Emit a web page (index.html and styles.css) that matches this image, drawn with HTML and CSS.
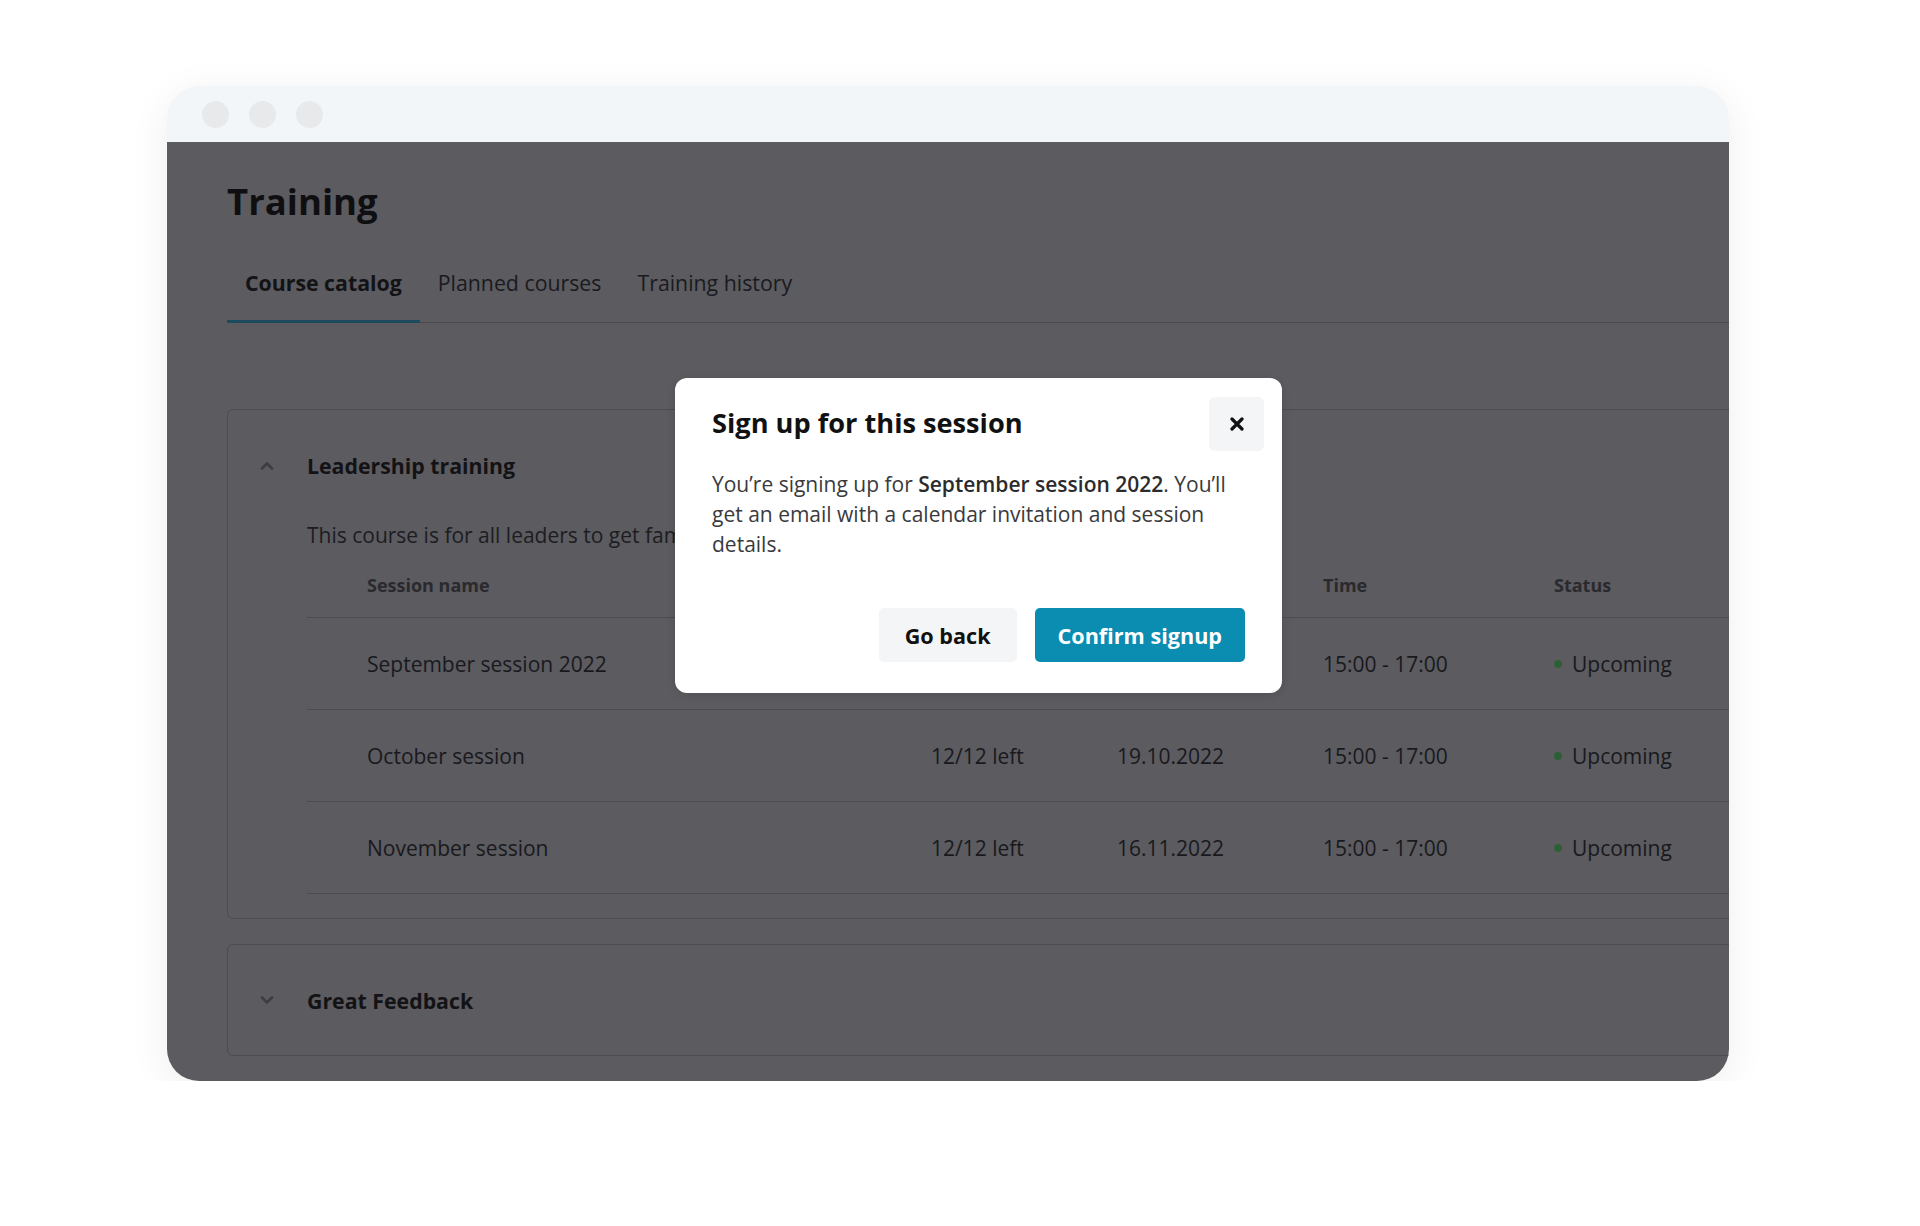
FILE: index.html
```html
<!DOCTYPE html>
<html lang="en">
  <head>
    <meta charset="UTF-8" />
    <title>Training</title>
    <link rel="stylesheet" href="styles.css">
  </head>
  <body>
    <div class="page">
      <div class="window">
        <div class="titlebar">
          <span class="dot"></span>
          <span class="dot"></span>
          <span class="dot"></span>
        </div>

        <div class="content">
          <h1 class="page-title">Training</h1>

          <div class="tabs">
            <div class="tab active">Course catalog</div>
            <div class="tab">Planned courses</div>
            <div class="tab">Training history</div>
          </div>

          <div class="course">
            <div class="course-head">
              <svg class="chevron" width="14" height="9" viewBox="0 0 14 9"><path d="M2 7.5 L7 2.5 L12 7.5" /></svg>
              <span class="course-name">Leadership training</span>
            </div>
            <div class="course-body">
              <p class="course-desc">This course is for all leaders to get familiar with our leadership principles.</p>

              <div class="sessions">
                <div class="row head">
                  <span></span>
                  <span>Session name</span>
                  <span>Seats</span>
                  <span>Date</span>
                  <span>Time</span>
                  <span>Status</span>
                </div>
                <div class="row">
                  <span></span>
                  <span>September session 2022</span>
                  <span>12/12 left</span>
                  <span>21.09.2022</span>
                  <span>15:00 - 17:00</span>
                  <span class="status"><i class="status-dot"></i>Upcoming</span>
                </div>
                <div class="row">
                  <span></span>
                  <span>October session</span>
                  <span>12/12 left</span>
                  <span>19.10.2022</span>
                  <span>15:00 - 17:00</span>
                  <span class="status"><i class="status-dot"></i>Upcoming</span>
                </div>
                <div class="row">
                  <span></span>
                  <span>November session</span>
                  <span>12/12 left</span>
                  <span>16.11.2022</span>
                  <span>15:00 - 17:00</span>
                  <span class="status"><i class="status-dot"></i>Upcoming</span>
                </div>
              </div>
            </div>
          </div>

          <div class="course closed">
            <div class="course-head">
              <svg class="chevron" width="14" height="9" viewBox="0 0 14 9"><path d="M2 1.5 L7 6.5 L12 1.5" /></svg>
              <span class="course-name">Great Feedback</span>
            </div>
          </div>
        </div>

        <div class="modal">
          <h2 class="modal-title">Sign up for this session</h2>
          <button class="modal-close">
            <svg width="14" height="14" viewBox="0 0 14 14"><path d="M2 2 L12 12 M12 2 L2 12" /></svg>
          </button>
          <p class="modal-text">You’re signing up for <strong>September session 2022</strong>. You’ll get an email with a calendar invitation and session details.</p>
          <div class="modal-actions">
            <button class="btn secondary">Go back</button>
            <button class="btn primary">Confirm signup</button>
          </div>
        </div>
      </div>
    </div>
  </body>
</html>
```

FILE: styles.css
```css
body {
  margin: 0;
  background-color: #fff;
  font-family: "Open Sans", "Noto Sans", sans-serif;
}
.page {
  padding: 86px 0 0 167px;
}
.window {
  position: relative;
  width: 1562px;
  height: 995px;
  border-radius: 32px;
  overflow: hidden;
  box-shadow: 0 8px 40px rgba(0, 0, 0, 0.07);
  display: flex;
  flex-direction: column;
}
.titlebar {
  height: 56px;
  flex-shrink: 0;
  background-color: #f3f6f8;
  display: flex;
  align-items: center;
  gap: 20px;
  padding-left: 35px;
}
.dot {
  width: 27px;
  height: 27px;
  border-radius: 50%;
  background-color: #e7e9eb;
}
.content {
  flex: 1;
  background-color: #5b5b60;
  padding: 33px 0 0 60px;
  color: #19191d;
}
.page-title {
  margin: 0;
  font-size: 36.5px;
  line-height: 52px;
  font-weight: 700;
  color: #0f0f12;
}
.tabs {
  display: flex;
  margin-top: 41px;
  border-bottom: 1px solid #4a4a4f;
}
.tab {
  padding: 0 18px 22px;
  font-size: 21.3px;
  line-height: 30px;
  color: #1a1a1e;
  border-bottom: 3px solid transparent;
  margin-bottom: -1px;
}
.tab.active {
  font-weight: 700;
  color: #131316;
  border-bottom-color: #1c4b5d;
}
.course {
  margin-top: 86px;
  margin-right: -20px;
  border: 1px solid #4b4b50;
  border-radius: 6px;
  padding-bottom: 24px;
}
.course.closed {
  margin-top: 25px;
  padding-bottom: 0;
}
.course-head {
  height: 110px;
  display: flex;
  align-items: center;
  gap: 33px;
  padding-left: 32px;
}
.chevron {
  fill: none;
  stroke: #3d3d42;
  stroke-width: 2.6;
  stroke-linecap: round;
  stroke-linejoin: round;
}
.course-name {
  font-size: 21.3px;
  font-weight: 700;
  color: #131316;
}
.course-body {
  padding-left: 79px;
}
.course-desc {
  margin: 0;
  font-size: 21px;
  line-height: 30px;
  color: #1d1d21;
}
.sessions {
  margin-top: 2px;
}
.row {
  display: grid;
  grid-template-columns: 60px 564px 186px 206px 231px 1fr;
  align-items: center;
  height: 92px;
  box-sizing: border-box;
  border-bottom: 1px solid #4b4b50;
  font-size: 21px;
  color: #19191d;
}
.row.head {
  height: 66px;
  font-size: 18px;
  font-weight: 700;
  color: #2a2a2e;
}
.status {
  display: flex;
  align-items: center;
  gap: 10px;
}
.status-dot {
  width: 8px;
  height: 8px;
  border-radius: 50%;
  background-color: #2d5f36;
}
.modal {
  position: absolute;
  left: 508px;
  top: 292px;
  width: 607px;
  box-sizing: border-box;
  padding: 26px 37px 31px;
  background-color: #fff;
  border-radius: 12px;
  box-shadow: 0 2px 8px rgba(0, 0, 0, 0.12);
}
.modal-title {
  margin: 0;
  font-size: 27.2px;
  line-height: 38px;
  font-weight: 700;
  color: #111;
}
.modal-close {
  position: absolute;
  top: 19px;
  right: 18px;
  width: 55px;
  height: 54px;
  border: none;
  border-radius: 6px;
  background-color: #f4f5f6;
  display: flex;
  align-items: center;
  justify-content: center;
  padding: 0;
}
.modal-close path {
  stroke: #111;
  stroke-width: 3.2;
  stroke-linecap: round;
}
.modal-text {
  margin: 27px 0 0;
  font-size: 21px;
  line-height: 30px;
  color: #3a3a3d;
}
.modal-text strong {
  font-weight: 600;
  color: #2b2b2e;
}
.modal-actions {
  display: flex;
  justify-content: flex-end;
  gap: 18px;
  margin-top: 49px;
}
.btn {
  height: 54px;
  border: none;
  border-radius: 5px;
  font-family: "Open Sans", "Noto Sans", sans-serif;
  font-size: 21.6px;
  font-weight: 700;
  padding: 0 23px;
}
.btn.secondary {
  background-color: #f4f5f6;
  color: #111;
  padding: 0 26px;
}
.btn.primary {
  background-color: #0b8cb1;
  color: #fff;
}
```
